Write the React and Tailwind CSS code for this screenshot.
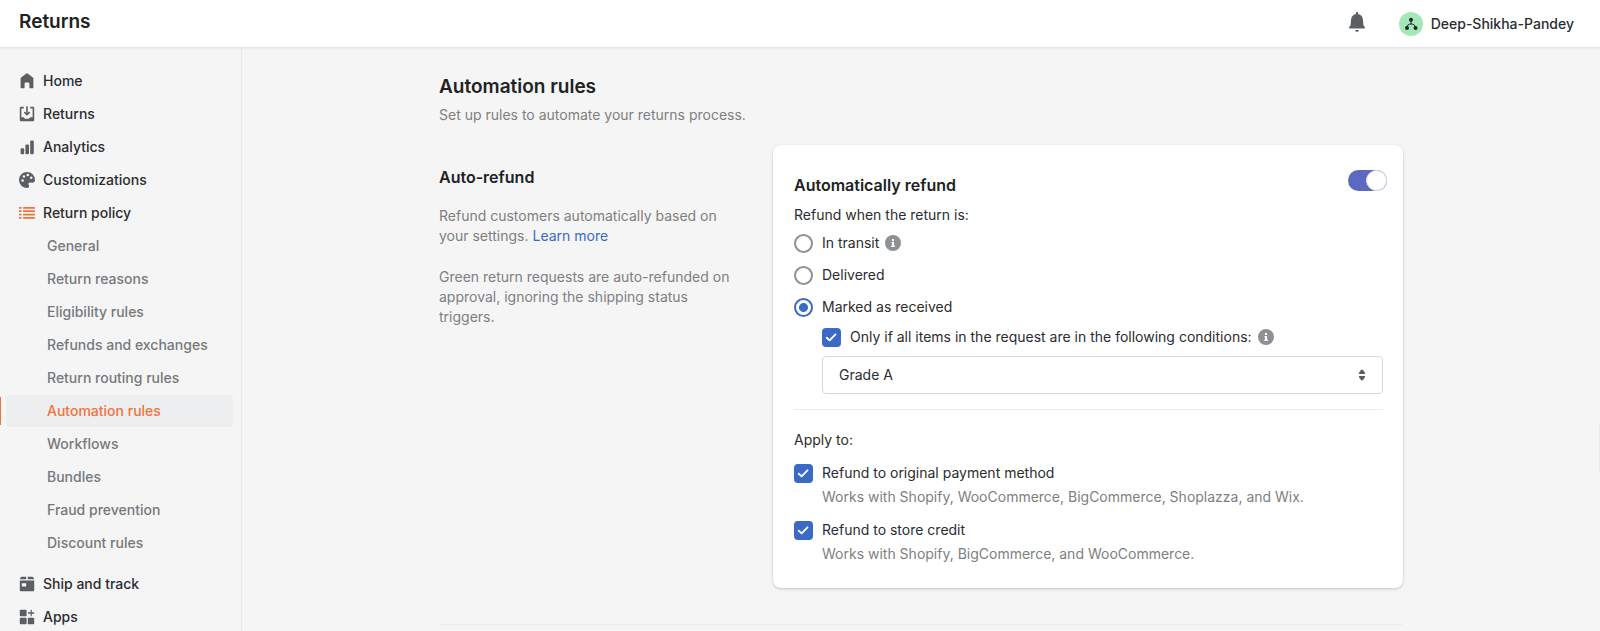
import React, { useState } from "react";

const HomeIcon = () => (
  <svg viewBox="0 0 20 20" className="w-4 h-4" fill="currentColor" aria-hidden="true">
    <path d="M18 7.3V18c0 .600-.400 1-1 1h-3c-.600 0-1-.400-1-1v-4.500c0-.800-.600-1.500-1.500-1.500h-3C7.600 12 7 12.700 7 13.500V18c0 .600-.400 1-1 1H3c-.600 0-1-.400-1-1V7.300c0-.900.300-1.600 1-2.100L8.800.900a2 2 0 0 1 2.400 0L17 5.200c.700.500 1 1.200 1 2.100z" />
  </svg>
);

const ReturnsIcon = () => (
  <svg viewBox="0 0 20 20" className="w-4 h-4" fill="currentColor" aria-hidden="true">
    <path d="M11 1a1 1 0 1 0-2 0v7.600L7.700 7.300a1 1 0 0 0-1.400 1.400l3 3a1 1 0 0 0 1.400 0l3-3a1 1 0 0 0-1.400-1.400L11 8.600V1z" />
    <path d="M3 14V3h3V1H2.500A1.500 1.500 0 0 0 1 2.500v15A1.500 1.500 0 0 0 2.500 19h15a1.500 1.500 0 0 0 1.500-1.500v-15A1.500 1.500 0 0 0 17.500 1H14v2h3v11h-2.500c-1 0-1.200 2-2.500 2H8c-1.300 0-1.500-2-2.500-2H3z" />
  </svg>
);

const AnalyticsIcon = () => (
  <svg viewBox="0 0 20 20" className="w-4 h-4" fill="currentColor" aria-hidden="true">
    <rect x="2" y="11.500" width="4.500" height="7.500" rx="1.500" />
    <rect x="8" y="7" width="4.500" height="12" rx="1.500" />
    <rect x="14" y="2" width="4.500" height="17" rx="1.500" />
  </svg>
);

const PaletteIcon = () => (
  <svg viewBox="0 0 20 20" className="w-4 h-4" fill="currentColor" aria-hidden="true">
    <path
      fillRule="evenodd"
      d="M10 0a10 10 0 1 0 0 20c1.800 0 2.800-.8 2.600-2.100-.2-1.300-1.300-2.300-.7-3.700.6-1.300 2-1.200 3.600-.9 2.600.4 4.500-.6 4.500-3.300A10 10 0 0 0 10 0zM4.500 12.200a1.600 1.600 0 1 1 0-3.200 1.600 1.600 0 0 1 0 3.200zM6.200 7.200a1.600 1.600 0 1 1 0-3.200 1.600 1.600 0 0 1 0 3.200zM11 5.300a1.600 1.600 0 1 1 0-3.200 1.600 1.600 0 0 1 0 3.200zM15.300 8.800a1.600 1.600 0 1 1 0-3.200 1.600 1.600 0 0 1 0 3.200z"
    />
  </svg>
);

const ListIcon = () => (
  <svg viewBox="0 0 16 16" className="w-4 h-4" fill="currentColor" aria-hidden="true">
    <rect x="0" y="2" width="2.500" height="1.700" />
    <rect x="0" y="5.300" width="2.500" height="1.700" />
    <rect x="0" y="8.700" width="2.500" height="1.700" />
    <rect x="0" y="12" width="2.500" height="1.700" />
    <rect x="4" y="2" width="12" height="1.700" rx=".5" />
    <rect x="4" y="5.300" width="12" height="1.700" rx=".5" />
    <rect x="4" y="8.700" width="12" height="1.700" rx=".5" />
    <rect x="4" y="12" width="12" height="1.700" rx=".5" />
  </svg>
);

const ShipIcon = () => (
  <svg viewBox="0 0 20 20" className="w-4 h-4" fill="currentColor" aria-hidden="true">
    <path d="M3.500 1H9v3H1l1-2.200A1.500 1.500 0 0 1 3.500 1zM11 1h5.500A1.500 1.500 0 0 1 18 1.800L19 4h-8V1z" />
    <path fillRule="evenodd" d="M1 5.500h18v12a1.500 1.500 0 0 1-1.500 1.500h-15A1.500 1.500 0 0 1 1 17.500v-12zM3.500 9v4H9V9H3.500z" />
  </svg>
);

const AppsIcon = () => (
  <svg viewBox="0 0 20 20" className="w-4 h-4" fill="currentColor" aria-hidden="true">
    <rect x="1" y="1" width="8.500" height="8" rx="1" />
    <rect x="1" y="11" width="8.500" height="8" rx="1" />
    <rect x="11" y="11" width="8" height="8" rx="1" />
    <path d="M14.500 1h1.500v3.200h3v1.600h-3V9h-1.500V5.800h-3.200V4.200h3.200V1z" />
  </svg>
);

const BellIcon = () => (
  <svg viewBox="0 0 20 20" className="w-5 h-5" fill="currentColor" aria-hidden="true">
    <path d="M10 0c.7 0 1.100.5 1.100 1.200v.9c2.900.5 4.700 2.800 4.900 5.900l.3 4.300c.1 1.200.6 1.800 1.300 2.500.8.800.3 1.700-.6 1.700H3c-.9 0-1.400-.9-.6-1.700.7-.7 1.200-1.300 1.300-2.500L4 8c.2-3.100 2-5.400 4.900-5.900v-.9C8.900.5 9.300 0 10 0zM8 18h4c-.2 1.200-1 1.800-2 1.800s-1.800-.6-2-1.800z" />
  </svg>
);

const InfoIcon = () => (
  <svg viewBox="0 0 16 16" className="w-4 h-4 text-[#8c9196]" aria-hidden="true">
    <circle cx="8" cy="8" r="8" fill="currentColor" />
    <rect x="7" y="4" width="2" height="2" fill="#fff" />
    <path d="M6.500 7H9v3.500h.800V12H6.200v-1.500H7V8.300h-.500z" fill="#fff" />
  </svg>
);

const CheckIcon = () => (
  <svg
    viewBox="0 0 20 20"
    className="absolute inset-0 w-full h-full pointer-events-none"
    fill="none"
    stroke="#fff"
    strokeWidth="2"
    strokeLinecap="round"
    strokeLinejoin="round"
    aria-hidden="true"
  >
    <path d="M5 10.200l3 2.800 6.200-6.300" />
  </svg>
);

const mainItems = [
  { id: "home", label: "Home", icon: HomeIcon },
  { id: "returns", label: "Returns", icon: ReturnsIcon },
  { id: "analytics", label: "Analytics", icon: AnalyticsIcon },
  { id: "customizations", label: "Customizations", icon: PaletteIcon },
  { id: "policy", label: "Return policy", icon: ListIcon, active: true },
];

const policyItems = [
  "General",
  "Return reasons",
  "Eligibility rules",
  "Refunds and exchanges",
  "Return routing rules",
  "Automation rules",
  "Workflows",
  "Bundles",
  "Fraud prevention",
  "Discount rules",
];

const bottomItems = [
  { id: "ship", label: "Ship and track", icon: ShipIcon },
  { id: "apps", label: "Apps", icon: AppsIcon },
];

const NavItem = ({ item }) => {
  const Icon = item.icon;
  return (
    <li>
      <a href="#" className="flex items-center gap-2 h-8 pl-[19px] font-medium">
        <span className={item.active ? "text-[#f2713b]" : "text-[#5c5f62]"}>
          <Icon />
        </span>
        {item.label}
      </a>
    </li>
  );
};

const Checkbox = ({ label, checked, onChange }) => (
  <label className="flex items-center gap-[9px]">
    <span className="relative w-[19px] h-[19px]">
      <input
        type="checkbox"
        checked={checked}
        onChange={onChange}
        className="block appearance-none w-full h-full rounded border-2 border-[#8c9196] bg-white checked:border-[#3b69c6] checked:bg-[#3b69c6]"
      />
      {checked && <CheckIcon />}
    </span>
    {label}
  </label>
);

const Radio = ({ label, checked, onChange }) => (
  <label className="flex items-center gap-[9px]">
    <input
      type="radio"
      name="refund-trigger"
      checked={checked}
      onChange={onChange}
      className="appearance-none w-[19px] h-[19px] rounded-full border-2 border-[#8c9196] bg-white checked:border-[#3b69c6] checked:bg-[radial-gradient(circle,#3b69c6_4px,#fff_5px)]"
    />
    {label}
  </label>
);

const App = () => {
  const [selectedItem, setSelectedItem] = useState("Automation rules");
  const [enabled, setEnabled] = useState(true);
  const [trigger, setTrigger] = useState("received");
  const [onlyIf, setOnlyIf] = useState(true);
  const [original, setOriginal] = useState(true);
  const [credit, setCredit] = useState(true);

  return (
    <div className="flex flex-col h-screen overflow-hidden bg-[#f5f5f5] font-['Inter',sans-serif] text-sm text-[#2b2d30]">
      <header className="relative z-10 flex items-center justify-between h-12 shrink-0 pl-[19px] pr-[26px] pb-1 bg-white border-b border-[#e4e5e7] shadow-xs">
        <div className="text-[19px] font-semibold text-[#202223]">Returns</div>
        <div className="flex items-center gap-8">
          <button type="button" aria-label="Notifications" className="text-[#5c5f62]">
            <BellIcon />
          </button>
          <button type="button" className="flex items-center gap-2 pt-1 font-medium">
            <svg viewBox="0 0 24 24" className="w-6 h-6" aria-hidden="true">
              <circle cx="12" cy="12" r="12" fill="#a4e8b8" />
              <g fill="#202223">
                <circle cx="12" cy="7.800" r="2" />
                <circle cx="8" cy="16" r="2" />
                <circle cx="16.500" cy="16" r="2" />
              </g>
              <path d="M12 8v4M8 16c0-3 1.500-4 4-4s4.500 1 4.500 4" fill="none" stroke="#202223" />
            </svg>
            Deep-Shikha-Pandey
          </button>
        </div>
      </header>

      <div className="flex flex-1 min-h-0">
        {/* Sidebar */}
        <aside className="w-[242px] shrink-0 pt-[17px] border-r border-[#e8e9ea] overflow-hidden">
          <nav>
            <ul className="flex flex-col gap-px">
              {mainItems.map((item) => (
                <NavItem key={item.id} item={item} />
              ))}
              {policyItems.map((name) => (
                <li key={name} className="relative pl-[6px] pr-2">
                  {selectedItem === name && (
                    <span className="absolute left-0 top-[2px] w-px h-7 bg-[#f2713b]" />
                  )}
                  <a
                    href="#"
                    onClick={() => setSelectedItem(name)}
                    className={`flex items-center h-8 pl-[41px] rounded font-medium ${
                      selectedItem === name
                        ? "bg-[#edeeef] text-[#f2713b]"
                        : "text-[#76797c]"
                    }`}
                  >
                    {name}
                  </a>
                </li>
              ))}
            </ul>
            <ul className="flex flex-col gap-px mt-[9px]">
              {bottomItems.map((item) => (
                <NavItem key={item.id} item={item} />
              ))}
            </ul>
          </nav>
        </aside>

        {/* Main content area */}
        <main className="relative flex-1 overflow-hidden">
          <span className="absolute right-0 top-[375px] w-px h-12 bg-[#e8e9ea]" />
          <div className="max-w-[964px] mx-auto pt-[25px]">
            <h1 className="text-[19px] leading-7 font-semibold text-[#202223]">
              Automation rules
            </h1>
            <p className="mt-1 leading-5 text-[#7d8083]">
              Set up rules to automate your returns process.
            </p>

            <section className="flex items-start justify-between mt-5 pb-9 border-b border-[#ebeced]">
              <div className="w-[300px] pt-5 leading-5 text-[#7d8083]">
                <h2 className="text-base leading-6 font-semibold text-[#202223]">Auto-refund</h2>
                <p className="mt-[17px]">
                  Refund customers automatically based on your settings.{" "}
                  <a href="#" className="text-[#3b69c6]">
                    Learn more
                  </a>
                </p>
                <p className="mt-[21px]">
                  Green return requests are auto-refunded on approval, ignoring the shipping
                  status triggers.
                </p>
              </div>

              <div className="w-[630px] pb-6 rounded-lg bg-white shadow-[0_1px_3px_rgba(0,0,0,0.2)] leading-5">
                <div className="flex items-start justify-between pt-[25px] pl-[21px] pr-4">
                  <h3 className="pt-[3px] text-base leading-6 font-semibold text-[#202223]">
                    Automatically refund
                  </h3>
                  <button
                    type="button"
                    role="switch"
                    aria-checked={enabled}
                    aria-label="Automatically refund"
                    onClick={() => setEnabled(!enabled)}
                    className={`flex w-[39px] h-[21px] rounded-full ${
                      enabled ? "justify-end bg-[#5c69c0]" : "justify-start bg-[#c9cccf]"
                    }`}
                  >
                    <span className="w-[21px] h-[21px] rounded-full bg-white border border-[#dfe1e8]" />
                  </button>
                </div>

                <div className="pl-[21px] pr-5">
                  <p className="mt-2">Refund when the return is:</p>
                  <div className="flex flex-col gap-3 mt-2">
                    <div className="flex items-center gap-[6px]">
                      <Radio
                        label="In transit"
                        checked={trigger === "transit"}
                        onChange={() => setTrigger("transit")}
                      />
                      <InfoIcon />
                    </div>
                    <Radio
                      label="Delivered"
                      checked={trigger === "delivered"}
                      onChange={() => setTrigger("delivered")}
                    />
                    <Radio
                      label="Marked as received"
                      checked={trigger === "received"}
                      onChange={() => setTrigger("received")}
                    />
                  </div>

                  <div className="pl-7">
                    <div className="flex items-center gap-[6px] mt-[10px]">
                      <Checkbox
                        label="Only if all items in the request are in the following conditions:"
                        checked={onlyIf}
                        onChange={() => setOnlyIf(!onlyIf)}
                      />
                      <InfoIcon />
                    </div>
                    <div className="relative mt-[9px]">
                      <select
                        aria-label="Item condition"
                        className="block appearance-none w-full h-[38px] px-4 rounded border border-[#d5d7d9] bg-white"
                      >
                        <option>Grade A</option>
                        <option>Grade B</option>
                      </select>
                      <svg
                        viewBox="0 0 8 12"
                        className="absolute right-[17px] top-[13px] w-2 h-3 pointer-events-none text-[#5c5f62]"
                        fill="currentColor"
                        aria-hidden="true"
                      >
                        <path d="M4 .5Q4.500.5 5 1L7 3.700Q7.600 5 6.500 5h-5Q.4 5 1 3.700L3 1Q3.500.5 4 .5zM4 11.500Q3.500 11.500 3 11L1 8.300Q.4 7 1.500 7h5Q7.600 7 7 8.300L5 11Q4.500 11.500 4 11.500z" />
                      </svg>
                    </div>
                  </div>

                  <hr className="mt-[15px] border-[#ebeced]" />

                  <p className="mt-5">Apply to:</p>
                  <div className="flex flex-col gap-[13px] mt-[13px]">
                    <div>
                      <Checkbox
                        label="Refund to original payment method"
                        checked={original}
                        onChange={() => setOriginal(!original)}
                      />
                      <p className="pl-7 mt-1 text-[#7d8083]">
                        Works with Shopify, WooCommerce, BigCommerce, Shoplazza, and Wix.
                      </p>
                    </div>
                    <div>
                      <Checkbox
                        label="Refund to store credit"
                        checked={credit}
                        onChange={() => setCredit(!credit)}
                      />
                      <p className="pl-7 mt-1 text-[#7d8083]">
                        Works with Shopify, BigCommerce, and WooCommerce.
                      </p>
                    </div>
                  </div>
                </div>
              </div>
            </section>
          </div>
        </main>
      </div>
    </div>
  );
};

export default App;
